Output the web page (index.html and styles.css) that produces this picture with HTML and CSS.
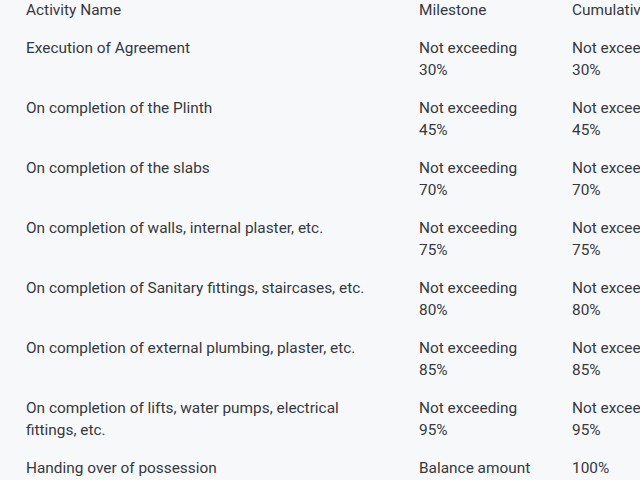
FILE: index.html
```html
<!DOCTYPE html>
<html lang="en">
<head>
<meta charset="utf-8">
<title>Payment Schedule</title>
<link rel="stylesheet" href="styles.css">
</head>
<body>
<div class="viewport">
  <div class="schedule">
    <div class="cell head name">Activity Name</div>
    <div class="cell head">Milestone</div>
    <div class="cell head">Cumulative</div>

    <div class="cell name">Execution of Agreement</div>
    <div class="cell">Not exceeding 30%</div>
    <div class="cell">Not exceeding 30%</div>

    <div class="cell name">On completion of the Plinth</div>
    <div class="cell">Not exceeding 45%</div>
    <div class="cell">Not exceeding 45%</div>

    <div class="cell name">On completion of the slabs</div>
    <div class="cell">Not exceeding 70%</div>
    <div class="cell">Not exceeding 70%</div>

    <div class="cell name">On completion of walls, internal plaster, etc.</div>
    <div class="cell">Not exceeding 75%</div>
    <div class="cell">Not exceeding 75%</div>

    <div class="cell name">On completion of Sanitary fittings, staircases, etc.</div>
    <div class="cell">Not exceeding 80%</div>
    <div class="cell">Not exceeding 80%</div>

    <div class="cell name">On completion of external plumbing, plaster, etc.</div>
    <div class="cell">Not exceeding 85%</div>
    <div class="cell">Not exceeding 85%</div>

    <div class="cell name">On completion of lifts, water pumps, electrical fittings, etc.</div>
    <div class="cell">Not exceeding 95%</div>
    <div class="cell">Not exceeding 95%</div>

    <div class="cell name">Handing over of possession</div>
    <div class="cell">Balance amount</div>
    <div class="cell">100%</div>
  </div>
</div>
</body>
</html>
```
FILE: styles.css
```css
html, body {
  margin: 0;
  padding: 0;
  background: #f7f8fa;
}
.viewport {
  width: 640px;
  height: 480px;
  overflow: hidden;
  font-family: Roboto, "Liberation Sans", sans-serif;
  font-size: 15.4px;
  line-height: 22px;
  color: #36393c;
}
.schedule {
  display: grid;
  grid-template-columns: 393px 153px 153px;
  padding-left: 26px;
  margin-top: -9px;
}
.cell {
  padding: 8px 34px 8px 0;
}
.cell.name {
  padding-right: 36px;
}
.cell.head {
  padding-bottom: 8px;
}
```
